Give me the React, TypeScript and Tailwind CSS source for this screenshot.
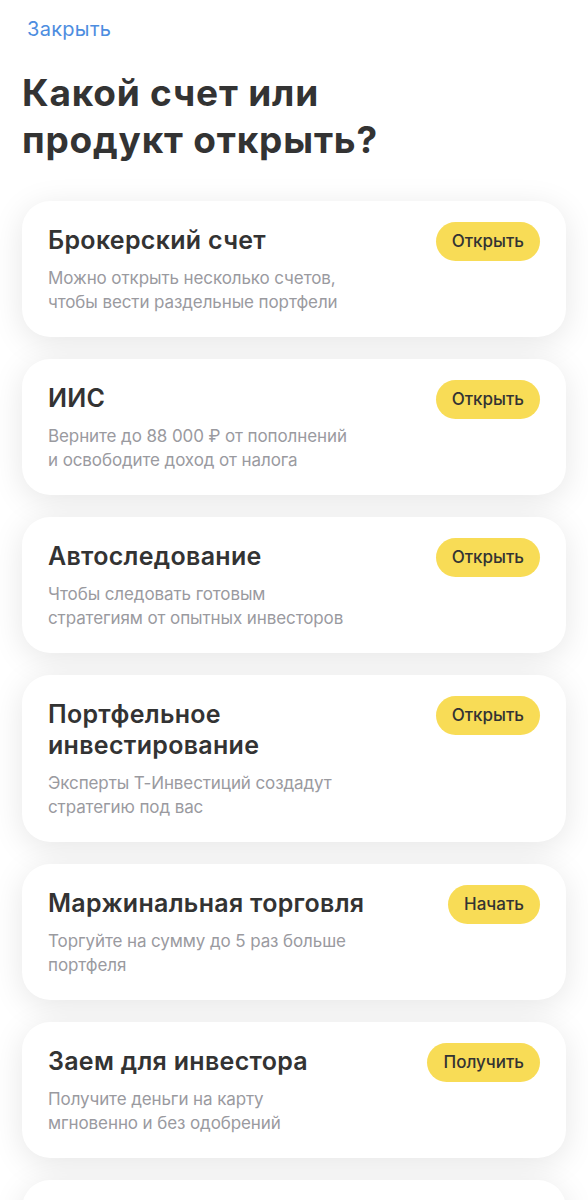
import React from "react";

type Item = { title: React.ReactNode; desc: React.ReactNode; btn: string };

const items: Item[] = [
  { title: "Брокерский счет", desc: <>Можно открыть несколько счетов,<br />чтобы вести раздельные портфели</>, btn: "Открыть" },
  { title: "ИИС", desc: <>Верните до 88 000 ₽ от пополнений<br />и освободите доход от налога</>, btn: "Открыть" },
  { title: "Автоследование", desc: <>Чтобы следовать готовым<br />стратегиям от опытных инвесторов</>, btn: "Открыть" },
  { title: <>Портфельное<br />инвестирование</>, desc: <>Эксперты Т-Инвестиций создадут<br />стратегию под вас</>, btn: "Открыть" },
  { title: "Маржинальная торговля", desc: <>Торгуйте на сумму до 5 раз больше<br />портфеля</>, btn: "Начать" },
  { title: "Заем для инвестора", desc: <>Получите деньги на карту<br />мгновенно и без одобрений</>, btn: "Получить" },
  { title: "Инвесткопилка", desc: <>Откладывайте сдачу<br />и инвестируйте</>, btn: "Открыть" },
];

export default function App() {
  return (
    <div className="min-h-screen bg-white text-[#333333]" style={{ fontFamily: "Inter, 'Noto Sans', sans-serif" }}>
      <div className="px-[22px] pt-[16px] pb-[40px]">
        <div className="pl-[5px] text-[20px] leading-[26px] tracking-[0.3px] text-[#4d8de0]">Закрыть</div>
        <h1 className="mt-[27px] text-[37px] leading-[47px] font-bold tracking-[0.8px] text-[#333333]">
          Какой счет или
          <br />
          продукт открыть?
        </h1>
        <div className="mt-[38px] flex flex-col gap-[22px]">
          {items.map((it, i) => (
            <div
              key={i}
              className="flex items-start justify-between rounded-[28px] bg-white pl-[26px] pr-[26px] pt-[21px] pb-[23px] shadow-[0_6px_32px_rgba(0,0,0,0.1)]"
            >
              <div className="flex flex-col">
                <div className="pt-[3px] text-[25px] leading-[31px] font-semibold tracking-[0.3px] text-[#333333]">{it.title}</div>
                <div className="mt-[10px] text-[17px] leading-[24px] tracking-[-0.1px] text-[#9a9a9f]">{it.desc}</div>
              </div>
              <div className="shrink-0 rounded-full bg-[#f8dc56] px-[16px] h-[39px] flex items-center text-[17px] font-medium text-[#333333]">
                {it.btn}
              </div>
            </div>
          ))}
        </div>
      </div>
    </div>
  );
}
